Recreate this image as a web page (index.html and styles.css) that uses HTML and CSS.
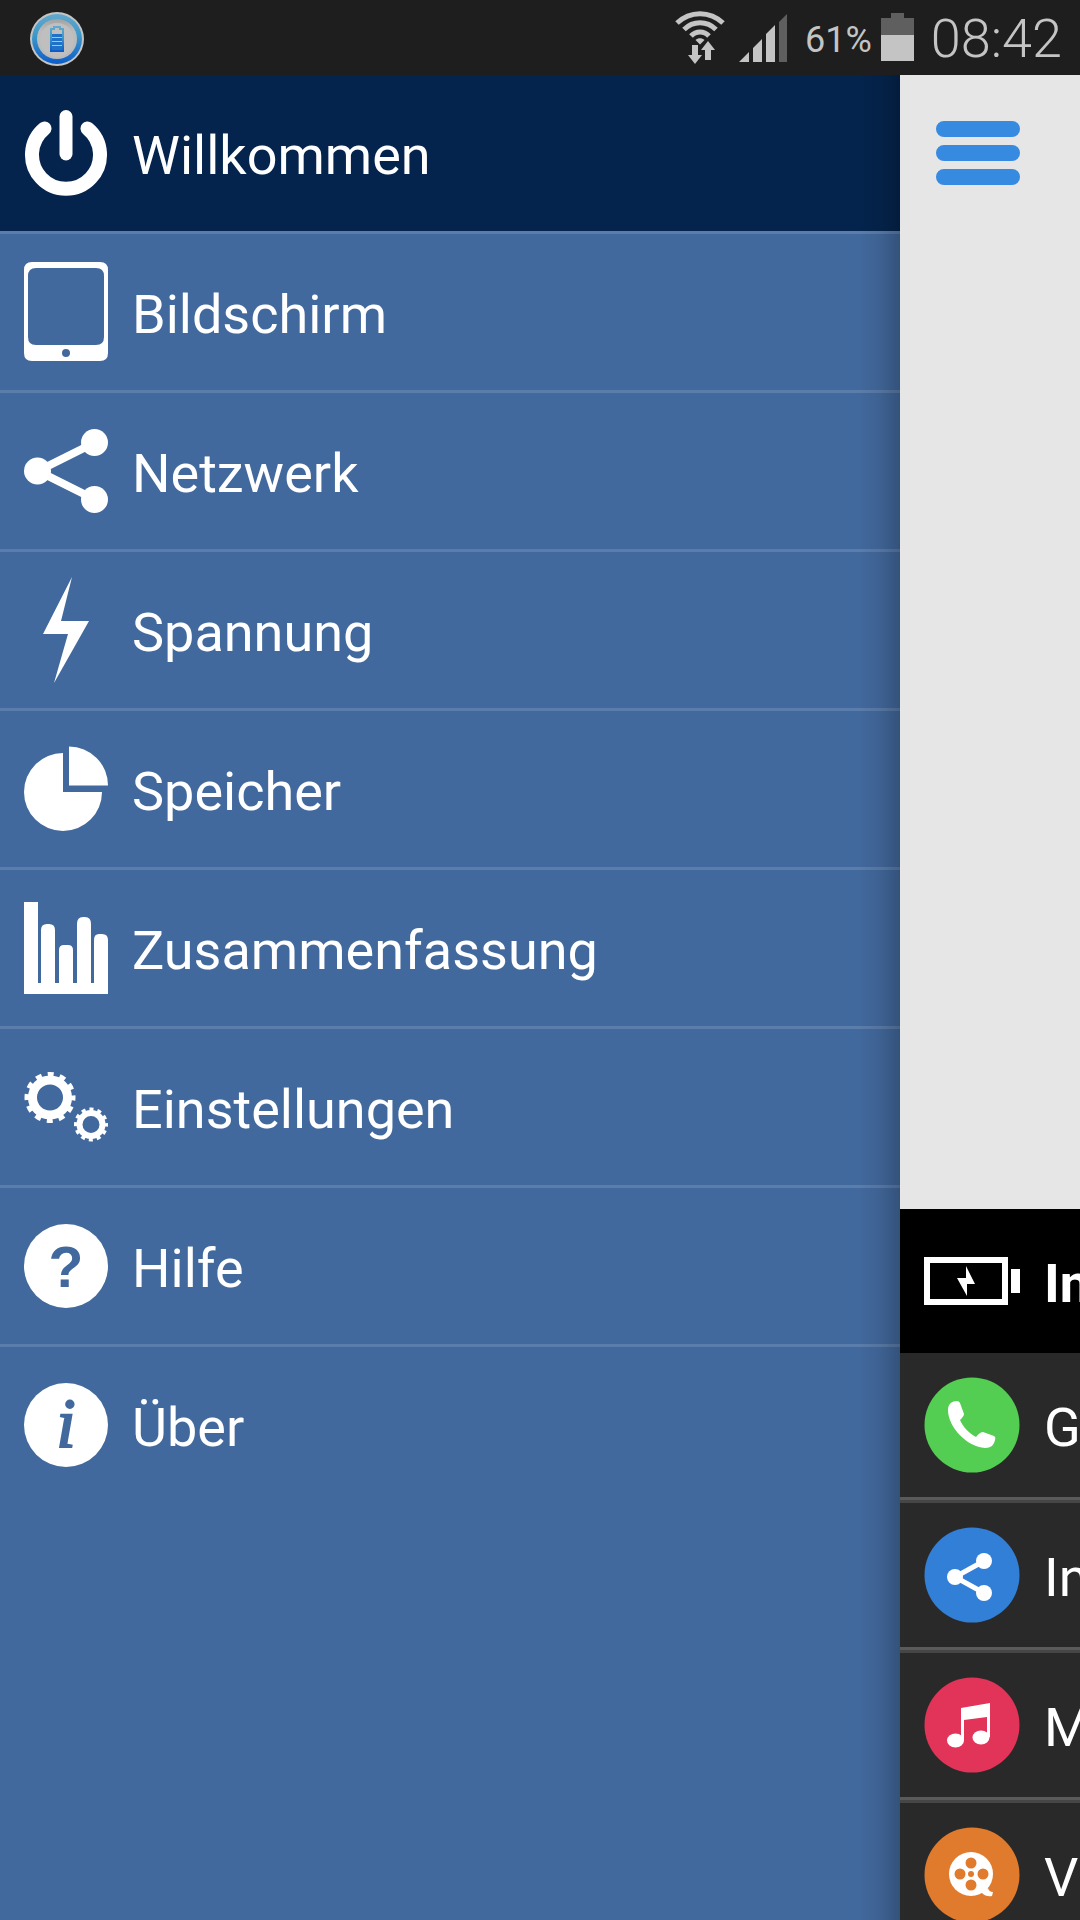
FILE: index.html
```html
<!DOCTYPE html>
<html lang="de">
<head>
<meta charset="utf-8">
<meta name="viewport" content="width=device-width, initial-scale=1">
<title>Willkommen</title>
<link rel="stylesheet" href="styles.css">
</head>
<body>
<header class="status">
  <svg class="status-app" width="54" height="54" viewBox="0 0 54 54" aria-hidden="true">
    <defs>
      <linearGradient id="ring" x1="0" y1="0" x2="0" y2="1"><stop offset="0" stop-color="#62a9cd"/><stop offset=".45" stop-color="#3a97ca"/><stop offset="1" stop-color="#0c5cc8"/></linearGradient>
      <linearGradient id="disc" x1="0" y1="0" x2="0" y2="1"><stop offset="0" stop-color="#a2a2a2"/><stop offset=".3" stop-color="#bcbcbc"/><stop offset="1" stop-color="#bababa"/></linearGradient>
    </defs>
    <circle cx="27" cy="27" r="27" fill="#c4c4c4"/>
    <circle cx="27" cy="27" r="25" fill="url(#ring)"/>
    <circle cx="27" cy="27" r="20" fill="url(#disc)"/>
    <circle cx="27" cy="28" r="17" fill="#bfbfbf"/>
    <path d="M21 17h3v-2h6v2h3v22H21z" fill="none" stroke="url(#ring)" stroke-width="2"/>
    <path d="M22 22h10v3H22zM22 26h10v3H22zM22 30h10v3H22zM22 34h10v4H22z" fill="#1f72c8"/>
  </svg>
  <div class="status-right">
    <svg width="50" height="75" viewBox="0 0 50 75" aria-hidden="true">
      <g fill="none" stroke="#c4c4c4" stroke-width="5">
        <path d="M2 23C15 10.500 35 10.500 48 23"/>
        <path d="M9 29.500C18 20.500 32 20.500 41 29.500"/>
        <path d="M16 36C21 30.500 29 30.500 34 36"/>
      </g>
      <path d="M20.500 40C23 37.500 27 37.500 29.500 40L25 44.500z" fill="#c4c4c4"/>
      <path d="M17 45h6v10h4l-7 9-7-9h4zM30 60V50h-4l7-9 7 9h-4v10z" fill="#c4c4c4"/>
    </svg>
    <svg width="48" height="75" viewBox="0 0 48 75" aria-hidden="true">
      <path d="M0 62l10-10v10zM14 62V48l9-9v23zM27 62V34l9-9v37z" fill="#c4c4c4"/>
      <path d="M40 62V22l8-8v48z" fill="#5f5f5f"/>
    </svg>
    <span class="percent">61%</span>
    <svg width="33" height="75" viewBox="0 0 33 75" aria-hidden="true">
      <path d="M0 35V18h10v-5h13v5h10v17z" fill="#5f5f5f"/>
      <path d="M0 35h33v26H0z" fill="#c4c4c4"/>
    </svg>
    <time class="clock">08:42</time>
  </div>
</header>
<div class="app">
  <nav class="drawer">
    <ul class="menu">
      <li><a class="menu-link current" href="#willkommen" aria-current="page">
        <svg width="84" height="86" viewBox="0 0 84 86" fill="none" stroke="#fff" stroke-linecap="round" aria-hidden="true"><path d="M20.500 18.500A34 34 0 1 0 63.500 18.500" stroke-width="14"/><path d="M42 6.500v37.500" stroke-width="13"/></svg>
        <span>Willkommen</span></a></li>
      <li><a class="menu-link" href="#bildschirm">
        <svg width="84" height="100" viewBox="0 0 84 100" fill="#fff" fill-rule="evenodd" aria-hidden="true"><path d="M8 0h68q8 0 8 8v83q0 8-8 8H8q-8 0-8-8V8q0-8 8-8zM12 6q-8 0-8 8v61q0 8 8 8h60q8 0 8-8V14q0-8-8-8zM42 87a4 4 0 1 0 0 8 4 4 0 0 0 0-8z"/></svg>
        <span>Bildschirm</span></a></li>
      <li><a class="menu-link" href="#netzwerk">
        <svg width="84" height="84" viewBox="0 0 84 84" fill="#fff" aria-hidden="true"><path d="M70 14L14 42l56 28" fill="none" stroke="#fff" stroke-width="8"/><circle cx="13.500" cy="42" r="13.500"/><circle cx="70.500" cy="13.500" r="13.500"/><circle cx="70.500" cy="70.500" r="13.500"/></svg>
        <span>Netzwerk</span></a></li>
      <li><a class="menu-link" href="#spannung">
        <svg width="84" height="106" viewBox="0 0 84 106" fill="#fff" aria-hidden="true"><path d="M48 0L19 57h25l-14 49 35-62H37z"/></svg>
        <span>Spannung</span></a></li>
      <li><a class="menu-link" href="#speicher">
        <svg width="84" height="86" viewBox="0 0 84 86" fill="#fff" aria-hidden="true"><path d="M39 7v39h39A39 39 0 1 1 39 7z"/><path d="M45 0.500a39 39 0 0 1 39 39H45z"/></svg>
        <span>Speicher</span></a></li>
      <li><a class="menu-link" href="#zusammenfassung">
        <svg width="84" height="92" viewBox="0 0 84 92" fill="#fff" aria-hidden="true"><path d="M0 0h14v81h3V28q0-6 6-6h2q6 0 6 6v53h4V48q0-5 5-5h4q5 0 5 5v33h4V22q0-7 6-7h2q6 0 6 7v59h3V38q0-6 5-6h3q6 0 6 6v54H0z"/></svg>
        <span>Zusammenfassung</span></a></li>
      <li><a class="menu-link" href="#einstellungen">
        <svg width="84" height="70" viewBox="0 0 84 70" fill="none" stroke="#fff" aria-hidden="true">
          <circle cx="26" cy="25.500" r="17.500" stroke-width="9"/>
          <circle cx="26" cy="25.500" r="23" stroke-width="5" stroke-dasharray="6 6.043" stroke-dashoffset="3"/>
          <circle cx="67" cy="52.500" r="11.500" stroke-width="6"/>
          <circle cx="67" cy="52.500" r="15" stroke-width="4" stroke-dasharray="4 3.854" stroke-dashoffset="2"/>
        </svg>
        <span>Einstellungen</span></a></li>
      <li><a class="menu-link" href="#hilfe">
        <svg width="84" height="84" viewBox="0 0 84 84" aria-hidden="true"><circle cx="42" cy="42" r="42" fill="#fff"/><text class="help-mark" x="42" y="63" text-anchor="middle">?</text></svg>
        <span>Hilfe</span></a></li>
      <li><a class="menu-link" href="#ueber">
        <svg width="84" height="84" viewBox="0 0 84 84" aria-hidden="true"><circle cx="42" cy="42" r="42" fill="#fff"/><text class="info-mark" x="42" y="64" text-anchor="middle">i</text></svg>
        <span>Über</span></a></li>
    </ul>
  </nav>
  <main class="page">
    <div class="page-top">
      <button class="toggle" type="button" aria-label="Menü"><i></i><i></i><i></i></button>
    </div>
    <section class="sheet">
      <h2 class="sheet-row sheet-head">
        <svg width="96" height="48" viewBox="0 0 96 48" fill="#fff" aria-hidden="true"><path d="M3 3h78v42H3z" fill="none" stroke="#fff" stroke-width="6"/><path d="M87 12h9v24h-9zM42 9l9 18h-8v12L33 21h9z"/></svg>
        <span>In</span></h2>
      <ul class="sheet-list">
        <li class="sheet-row">
          <svg width="96" height="96" viewBox="0 0 96 96" fill="#fff" aria-hidden="true"><circle cx="48" cy="48" r="47.500" fill="#53ce53"/><path d="M24 33c0-6 4-9 9-9q2 0 3 2l4 11q0 2-4 6c3 7 9 13 16 17q4-5 7-5l11 4q2 1 1 4c-1 5-4 8-10 8C43 70 24 50 24 33z"/></svg>
          <span>G</span></li>
        <li class="sheet-row">
          <svg width="96" height="96" viewBox="0 0 96 96" fill="#fff" aria-hidden="true"><circle cx="48" cy="48" r="47.500" fill="#327fd8"/><path d="M60 34L31 50l29 16" fill="none" stroke="#fff" stroke-width="5"/><circle cx="31" cy="50" r="8"/><circle cx="60" cy="34" r="8"/><circle cx="60" cy="66" r="8"/></svg>
          <span>In</span></li>
        <li class="sheet-row">
          <svg width="96" height="96" viewBox="0 0 96 96" fill="#fff" aria-hidden="true"><circle cx="48" cy="48" r="47.500" fill="#e23459"/><path d="M37 31l29-5v34h-3V40l-23 3v20h-3z"/><ellipse cx="31.500" cy="63.500" rx="8.500" ry="7"/><ellipse cx="57" cy="60.500" rx="8.500" ry="7"/></svg>
          <span>M</span></li>
        <li class="sheet-row">
          <svg width="96" height="96" viewBox="0 0 96 96" fill="#fff" aria-hidden="true"><circle cx="48" cy="48" r="47.500" fill="#e07b2e"/><path d="M55 66q6-2 9-5 1 4 5 4l-1 4q-6 1-10-3z"/><circle cx="47" cy="47" r="22"/><g fill="#e07b2e"><circle cx="47" cy="36" r="5.500"/><circle cx="47" cy="58" r="5.500"/><circle cx="36" cy="47" r="5.500"/><circle cx="59" cy="47" r="5.500"/><circle cx="47" cy="47" r="3"/></g></svg>
          <span>V</span></li>
      </ul>
    </section>
  </main>
</div>
</body>
</html>
```
FILE: styles.css
```css
* {
  box-sizing: border-box;
}

body {
  margin: 0;
  height: 100vh;
  display: flex;
  flex-direction: column;
  overflow: hidden;
  font-family: Roboto, "Liberation Sans", sans-serif;
  font-size: 54px;
  line-height: 64px;
  color: #fff;
  background: #42699d;
}

ul {
  margin: 0;
  padding: 0;
  list-style: none;
}

svg {
  display: block;
  flex: none;
}

/* Status bar */
.status {
  flex: none;
  height: 75px;
  display: flex;
  align-items: center;
  justify-content: space-between;
  padding: 0 18px 0 30px;
  background: #1e1e1e;
  color: #c4c4c4;
}

.status-app {
  margin-top: 3px;
}

.status-right {
  display: flex;
  align-items: center;
}

.status-right svg + svg {
  margin-left: 14px;
}

.percent {
  padding-top: 4px;
  margin: 0 9px 0 18px;
  font-size: 36px;
  line-height: 42px;
}

.clock {
  padding-top: 2px;
  margin-left: 17px;
  font-weight: 300;
}

/* Drawer beside the page that it pushed aside */
.app {
  flex: 1;
  min-height: 0;
  display: flex;
}

.drawer {
  flex: 1;
  min-width: 0;
  position: relative;
  background: #42699d;
}

.drawer::after {
  content: "";
  position: absolute;
  inset: 0 0 0 auto;
  width: 42px;
  background: linear-gradient(to right, rgba(0, 0, 0, 0), rgba(0, 0, 0, 0.07) 50%, rgba(0, 0, 0, 0.22));
  pointer-events: none;
}

.menu li + li {
  border-top: 3px solid #5b7dab;
}

.menu-link {
  display: flex;
  align-items: center;
  gap: 24px;
  height: 156px;
  padding: 0 24px;
  color: inherit;
  text-decoration: none;
}

.menu-link span,
.sheet-row span {
  padding-top: 6px;
}

.current {
  background: #04244d;
}

.help-mark {
  font: bold 57px "Liberation Sans", sans-serif;
  fill: #42699d;
}

.info-mark {
  font: italic 70px "Liberation Serif", serif;
  fill: #42699d;
  stroke: #42699d;
  stroke-width: 2px;
}

/* Visible strip of the page */
.page {
  flex: none;
  width: 180px;
  display: flex;
  flex-direction: column;
  overflow: hidden;
  background: #e6e6e6;
}

.page-top {
  flex: 1;
  padding: 46px 36px;
}

.toggle {
  display: flex;
  flex-direction: column;
  gap: 8px;
  width: 84px;
  padding: 0;
  border: 0;
  background: none;
}

.toggle i {
  height: 16px;
  width: 100%;
  border-radius: 8px;
  background: #368ae0;
}

.sheet {
  flex: none;
  height: 711px;
  overflow: hidden;
  background: #292929;
}

.sheet-row {
  display: flex;
  align-items: center;
  gap: 24px;
  height: 144px;
  margin: 0;
  padding-left: 24px;
}

.sheet-head {
  font-size: 54px;
  font-weight: 700;
  background: #000;
}

.sheet-list .sheet-row + .sheet-row {
  height: 150px;
  border-top: 3px solid #5a5a5a;
  box-shadow: inset 0 3px #464646;
  padding-top: 3px;
}
```
